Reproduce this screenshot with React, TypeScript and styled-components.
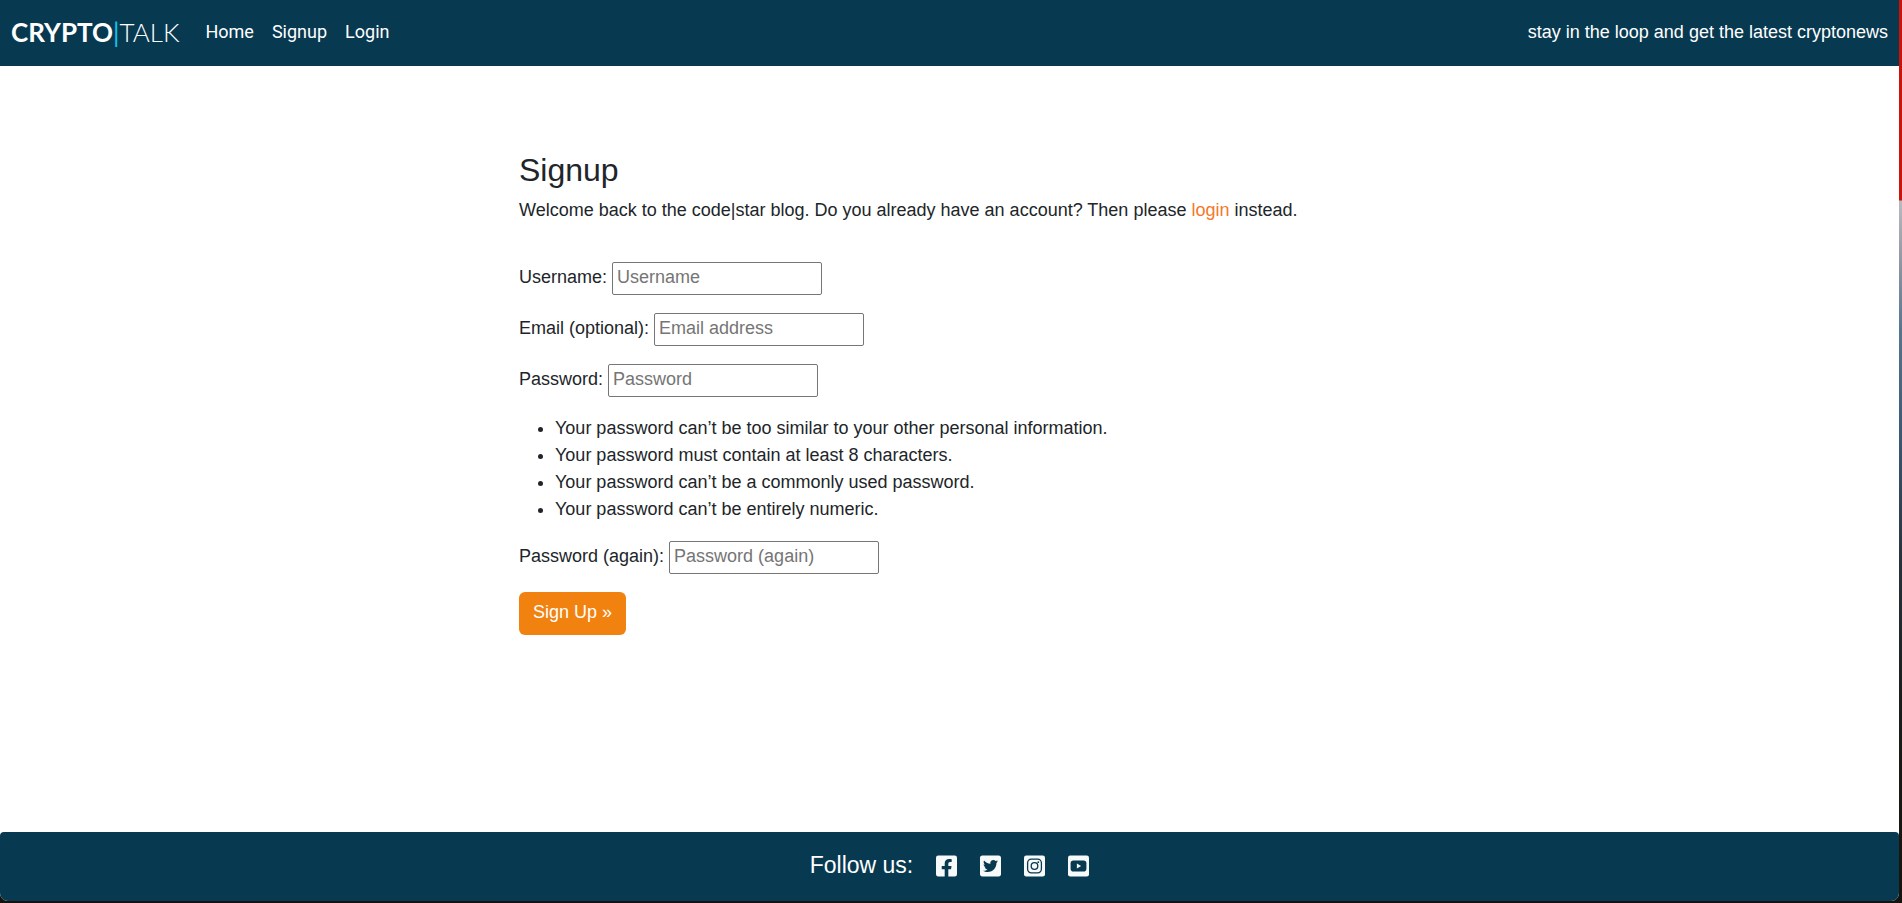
import React from 'react';
import styled, { createGlobalStyle } from 'styled-components';
import { FaFacebookSquare, FaTwitterSquare } from 'react-icons/fa';

const GlobalStyle = createGlobalStyle`
  *, *::before, *::after { box-sizing: border-box; }
  body {
    margin: 0;
    background: linear-gradient(
      #c8140a 0, #c8140a 200px, #b9bac0 201px, #9a9da8 250px, #56758f 330px,
      #3c5a78 430px, #26323c 560px, #1a1d1c 700px, #16130f 100%
    );
    color: #212529;
    font: 18px/27px "Liberation Sans", Arial, sans-serif;
  }
`;

const Desktop = styled.div`
  min-height: 100vh;
  padding: 0 3px 2px 0;
  display: flex;
`;

const Page = styled.div`
  flex: 1;
  display: flex;
  flex-direction: column;
  background: #fff;
  border-radius: 0 0 8px 8px;
  overflow: hidden;
`;

const Navbar = styled.nav`
  display: flex;
  align-items: center;
  height: 66px;
  padding: 0 11px 2px;
  background: #073951;
  color: #fff;
`;

const Brand = styled.a`
  margin-right: 26px;
  color: #fff;
  font: 300 26px/38px Lato, sans-serif;
  text-decoration: none;
  strong { font-weight: 700; }
`;

const Divider = styled.span`
  color: #12c4ee;
  font-weight: 400;
`;

const NavLinks = styled.div`
  display: flex;
  flex: 1;
  gap: 18px;
  padding-bottom: 2px;
`;

const NavLink = styled.a`
  color: #fff;
  font-family: Roboto, sans-serif;
  text-decoration: none;
`;

const Main = styled.main`
  flex: 1;
  width: 100%;
  max-width: 861px;
  margin: 0 auto;
  padding-top: 85px;
`;

const Title = styled.h1`
  margin: 0 0 8px;
  font-size: 32px;
  font-weight: 400;
  line-height: 38px;
`;

const Intro = styled.p`
  margin: 0 0 38px;
`;

const TextLink = styled.a`
  color: #f4782a;
  text-decoration: none;
`;

const Form = styled.form`
  display: flex;
  flex-direction: column;
  align-items: flex-start;
  gap: 18px;
`;

const Field = styled.div`
  display: flex;
  align-items: center;
  gap: 5px;
  label { padding-bottom: 2px; }
`;

const TextInput = styled.input`
  width: 210px;
  height: 33px;
  padding: 0 4px 2px;
  border: 1px solid #767676;
  border-radius: 2px;
  font: inherit;
  &::placeholder { color: #757575; }
`;

const Hints = styled.ul`
  margin: 0;
  padding-left: 36px;
`;

const SubmitButton = styled.button`
  height: 43px;
  padding: 0 14px 2px;
  border: 0;
  border-radius: 6px;
  background: #f2820f;
  color: #fff;
  font: inherit;
`;

const Footer = styled.footer`
  display: flex;
  align-items: center;
  justify-content: center;
  gap: 23px;
  height: 69px;
  padding-bottom: 2px;
  border-radius: 4px 4px 0 0;
  background: #073951;
  color: #fff;
  font-size: 23px;
`;

const Socials = styled.div`
  display: flex;
  gap: 23px;
`;

const SocialLink = styled.a`
  display: flex;
  color: #f8f9fa;
  svg { width: 21px; height: 24px; }
`;

const navItems = ['Home', 'Signup', 'Login'];

const hints = [
  'Your password can’t be too similar to your other personal information.',
  'Your password must contain at least 8 characters.',
  'Your password can’t be a commonly used password.',
  'Your password can’t be entirely numeric.',
];

// Thin-line camera on a rounded tile; the lines are cut out in the footer colour.
function InstagramTile() {
  return (
    <svg viewBox="0 0 21 24" aria-hidden="true">
      <rect y="1.5" width="21" height="21" rx="2.2" fill="currentColor" />
      <g fill="none" stroke="#073951" strokeWidth="1.3">
        <rect x="3.6" y="5.1" width="13.8" height="13.8" rx="3.8" />
        <circle cx="10.5" cy="12" r="3.3" />
      </g>
      <circle cx="14.3" cy="8.2" r="0.9" fill="#073951" />
    </svg>
  );
}

// Wide play badge on the same rounded tile.
function YoutubeTile() {
  return (
    <svg viewBox="0 0 21 24" aria-hidden="true">
      <rect y="1.5" width="21" height="21" rx="2.2" fill="currentColor" />
      <rect x="2.6" y="6.4" width="15.8" height="11.2" rx="2.8" fill="#073951" />
      <path d="M8.9 9.6v4.8l4.2-2.4z" fill="currentColor" />
    </svg>
  );
}

const socials = [
  { name: 'Facebook', Icon: FaFacebookSquare },
  { name: 'Twitter', Icon: FaTwitterSquare },
  { name: 'Instagram', Icon: InstagramTile },
  { name: 'YouTube', Icon: YoutubeTile },
];

interface FormFieldProps {
  id: string;
  label: string;
  placeholder: string;
  type?: string;
}

function FormField({ id, label, placeholder, type = 'text' }: FormFieldProps) {
  return (
    <Field>
      <label htmlFor={id}>{label}</label>
      <TextInput id={id} name={id} type={type} placeholder={placeholder} />
    </Field>
  );
}

export default function App() {
  return (
    <Desktop>
      <GlobalStyle />
      <Page>
        <Navbar>
          <Brand href="#"><strong>CRYPTO</strong><Divider>|</Divider>TALK</Brand>
          <NavLinks>
            {navItems.map((item) => <NavLink key={item} href="#">{item}</NavLink>)}
          </NavLinks>
          <span>stay in the loop and get the latest cryptonews</span>
        </Navbar>
        <Main>
          <Title>Signup</Title>
          <Intro>
            Welcome back to the code|star blog. Do you already have an account? Then please{' '}
            <TextLink href="#">login</TextLink> instead.
          </Intro>
          <Form onSubmit={(e) => e.preventDefault()}>
            <FormField id="username" label="Username:" placeholder="Username" />
            <FormField id="email" label="Email (optional):" placeholder="Email address" type="email" />
            <FormField id="password1" label="Password:" placeholder="Password" type="password" />
            <Hints>
              {hints.map((hint) => <li key={hint}>{hint}</li>)}
            </Hints>
            <FormField id="password2" label="Password (again):" placeholder="Password (again)" type="password" />
            <SubmitButton type="submit">Sign Up »</SubmitButton>
          </Form>
        </Main>
        <Footer>
          <span>Follow us:</span>
          <Socials>
            {socials.map(({ name, Icon }) => (
              <SocialLink key={name} href="#" aria-label={name}><Icon /></SocialLink>
            ))}
          </Socials>
        </Footer>
      </Page>
    </Desktop>
  );
}
